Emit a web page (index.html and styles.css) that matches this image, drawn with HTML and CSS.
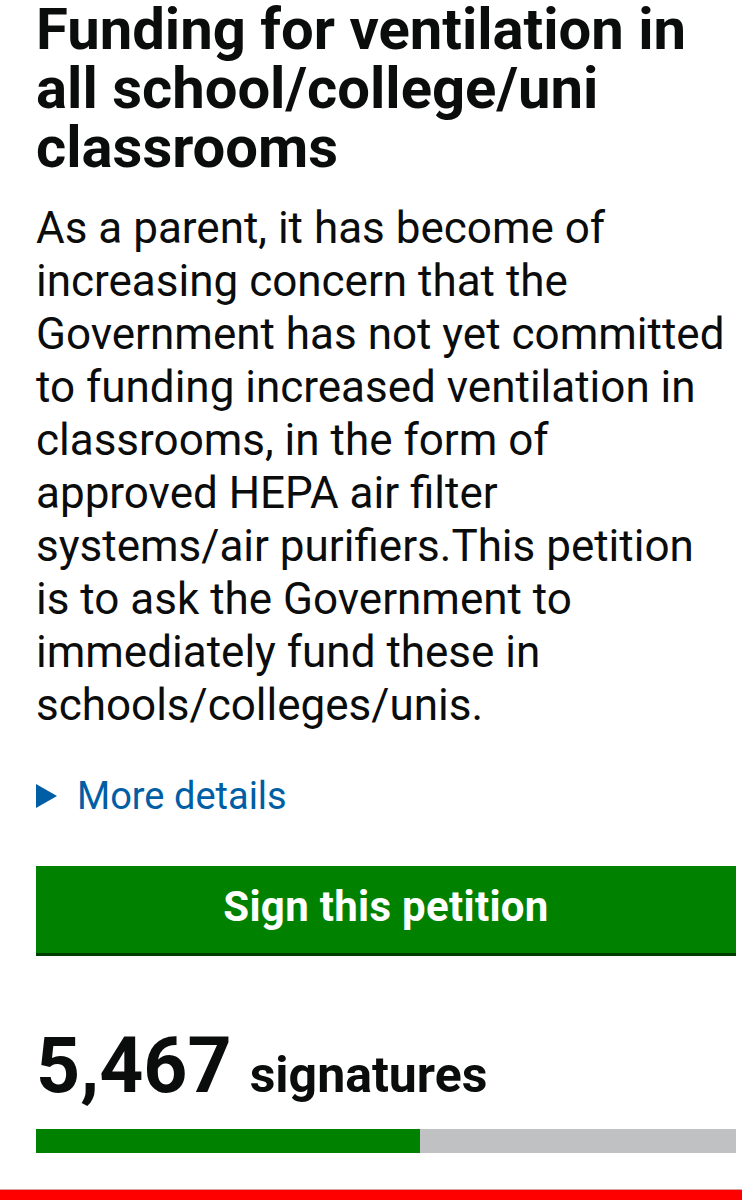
FILE: index.html
```html
<!DOCTYPE html>
<html lang="en">
<head>
  <meta charset="UTF-8">
  <title>Petition - Funding for ventilation</title>
  <meta name="viewport" content="width=device-width, initial-scale=1.0">
  <link rel="stylesheet" href="styles.css">
</head>
<body>
  <main class="petition">
    <h1>Funding for ventilation in all school/college/uni classrooms</h1>
    <p class="summary">As a parent, it has become of increasing concern that the Government has not yet committed to funding increased ventilation in classrooms, in the form of approved HEPA air filter systems/air purifiers.This petition is to ask the Government to immediately fund these in schools/colleges/unis.</p>

    <!-- Expandable details link -->
    <a class="details" href="#"><span class="arrow"></span>More details</a>

    <button class="sign">Sign this petition</button>

    <div class="count">
      <span class="number">5,467</span>
      <span class="label">signatures</span>
    </div>
    <div class="progress">
      <div class="progress-fill" style="width: 54.9%"></div>
    </div>
  </main>
  <div class="footer-bar"></div>
</body>
</html>
```

FILE: styles.css
```css
/* Reset & Global Styles */
* { margin: 0; padding: 0; box-sizing: border-box; }
body {
  font-family: Roboto, "Liberation Sans", Arial, sans-serif;
  background-color: #fff;
  color: #0b0c0c;
  overflow-x: hidden;
}
a { text-decoration: none; }

/* Page Container */
.petition {
  width: 736px;
  padding-left: 36px;
}

/* Title */
.petition h1 {
  font-size: 58px;
  font-weight: 700;
  line-height: 59px;
  margin-bottom: 25px;
}

/* Summary text */
.summary {
  font-size: 44px;
  line-height: 53px;
  margin-bottom: 43px;
}

/* More details link */
.details {
  display: flex;
  align-items: center;
  color: #005ea5;
  font-size: 38px;
  line-height: 42px;
}
.details .arrow {
  width: 0;
  height: 0;
  border-top: 12.5px solid transparent;
  border-bottom: 12.5px solid transparent;
  border-left: 21px solid #005ea5;
  margin-right: 20px;
}

/* Sign button */
.sign {
  display: block;
  width: 700px;
  height: 87px;
  margin-top: 49px;
  padding-bottom: 6px;
  background-color: #008200;
  border: none;
  box-shadow: 0 3px 0 #003d00;
  color: #fff;
  font-family: inherit;
  font-size: 42px;
  font-weight: 700;
  letter-spacing: 0.3px;
  cursor: pointer;
}

/* Signature count */
.count {
  display: flex;
  align-items: baseline;
  margin-top: 68px;
  font-weight: 700;
}
.count .number {
  font-size: 77px;
  line-height: 90px;
  margin-right: 18px;
}
.count .label {
  font-size: 50px;
  line-height: 1;
}

/* Progress bar */
.progress {
  width: 700px;
  height: 24px;
  margin-top: 18px;
  background-color: #bfc1c3;
}
.progress-fill {
  height: 100%;
  background-color: #008200;
}

/* Bottom red strip */
.footer-bar {
  position: fixed;
  left: 0;
  bottom: 0;
  width: 100%;
  height: 11px;
  background-color: #ff0000;
  border-top: 1px solid #d9a0a0;
}
```
